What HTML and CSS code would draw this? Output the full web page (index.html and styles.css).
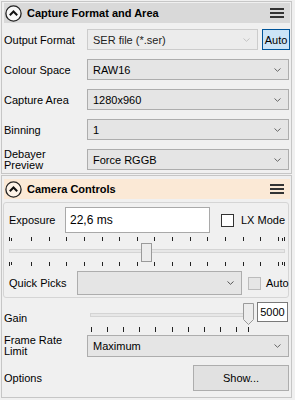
FILE: index.html
```html
<!DOCTYPE html>
<html lang="en">
  <head>
    <meta charset="UTF-8" />
    <title>Capture settings</title>
    <link rel="stylesheet" href="styles.css">
  </head>
  <body>
    <section class="section section-format">
      <div class="bar bar-grey">
        <svg class="bar-toggle" width="17" height="17" viewBox="0 0 17 17">
          <circle cx="8.5" cy="8.5" r="7.6" fill="#f7f7f7" stroke="#222" stroke-width="1.3" />
          <polyline points="4.8,10.2 8.5,6.5 12.2,10.2" fill="none" stroke="#111" stroke-width="2" />
        </svg>
        <span class="bar-title">Capture Format and Area</span>
        <svg class="bar-menu" width="14" height="10" viewBox="0 0 14 10">
          <rect x="0" y="0" width="14" height="2" fill="#333" />
          <rect x="0" y="4" width="14" height="2" fill="#333" />
          <rect x="0" y="8" width="14" height="2" fill="#333" />
        </svg>
      </div>

      <div class="row row-first">
        <span class="lbl">Output Format</span>
        <div class="combo combo-disabled combo-short">
          <span>SER file (*.ser)</span>
          <svg class="chev" width="7" height="4" viewBox="0 0 7 4"><polyline points="0.5,0.5 3.5,3.3 6.5,0.5" fill="none" stroke="#c4c4c4" /></svg>
        </div>
        <button class="auto-btn">Auto</button>
      </div>
      <div class="row">
        <span class="lbl">Colour Space</span>
        <div class="combo">
          <span>RAW16</span>
          <svg class="chev" width="7" height="4" viewBox="0 0 7 4"><polyline points="0.5,0.5 3.5,3.3 6.5,0.5" fill="none" stroke="#666" /></svg>
        </div>
      </div>
      <div class="row">
        <span class="lbl">Capture Area</span>
        <div class="combo">
          <span>1280x960</span>
          <svg class="chev" width="7" height="4" viewBox="0 0 7 4"><polyline points="0.5,0.5 3.5,3.3 6.5,0.5" fill="none" stroke="#666" /></svg>
        </div>
      </div>
      <div class="row">
        <span class="lbl">Binning</span>
        <div class="combo">
          <span>1</span>
          <svg class="chev" width="7" height="4" viewBox="0 0 7 4"><polyline points="0.5,0.5 3.5,3.3 6.5,0.5" fill="none" stroke="#666" /></svg>
        </div>
      </div>
      <div class="row">
        <span class="lbl lbl-two">Debayer<br />Preview</span>
        <div class="combo">
          <span>Force RGGB</span>
          <svg class="chev" width="7" height="4" viewBox="0 0 7 4"><polyline points="0.5,0.5 3.5,3.3 6.5,0.5" fill="none" stroke="#666" /></svg>
        </div>
      </div>
    </section>

    <section class="section section-camera">
      <div class="bar bar-peach">
        <svg class="bar-toggle" width="17" height="17" viewBox="0 0 17 17">
          <circle cx="8.5" cy="8.5" r="7.6" fill="#fdf3e8" stroke="#222" stroke-width="1.3" />
          <polyline points="4.8,10.2 8.5,6.5 12.2,10.2" fill="none" stroke="#111" stroke-width="2" />
        </svg>
        <span class="bar-title">Camera Controls</span>
        <svg class="bar-menu" width="14" height="10" viewBox="0 0 14 10">
          <rect x="0" y="0" width="14" height="2" fill="#333" />
          <rect x="0" y="4" width="14" height="2" fill="#333" />
          <rect x="0" y="8" width="14" height="2" fill="#333" />
        </svg>
      </div>

      <div class="group">
        <div class="exp-row">
          <span class="exp-lbl">Exposure</span>
          <div class="text-box exp-box">22,6 ms</div>
          <span class="check"></span>
          <span class="check-lbl">LX Mode</span>
        </div>

        <svg class="exp-slider" width="284" height="36" viewBox="0 0 284 36">
          <g id="expTicksTop" stroke="#222" stroke-width="1"></g>
          <rect x="5.5" y="16.5" width="275" height="3" fill="#e7e7e7" stroke="#d4d4d4" />
          <rect x="137.5" y="10.5" width="10" height="18" fill="#ececec" stroke="#9a9a9a" />
          <g id="expTicksBottom" stroke="#222" stroke-width="1"></g>
        </svg>

        <div class="qp-row">
          <span class="qp-lbl">Quick Picks</span>
          <div class="combo combo-qp">
            <span></span>
            <svg class="chev" width="7" height="4" viewBox="0 0 7 4"><polyline points="0.5,0.5 3.5,3.3 6.5,0.5" fill="none" stroke="#555" /></svg>
          </div>
          <span class="check check-disabled"></span>
          <span class="check-lbl">Auto</span>
        </div>
      </div>

      <div class="gain-row">
        <span class="gain-lbl">Gain</span>
        <svg class="gain-slider" width="166" height="31" viewBox="0 0 166 31">
          <rect x="0.5" y="11.5" width="159" height="3" fill="#e7e7e7" stroke="#d4d4d4" />
          <g id="gainTicks" stroke="#222" stroke-width="1"></g>
          <polygon points="153.5,1.5 163.5,1.5 163.5,17.5 158.5,22.5 153.5,17.5" fill="#ececec" stroke="#9a9a9a" />
        </svg>
        <div class="text-box gain-box">5000</div>
      </div>

      <div class="row row-fps">
        <span class="lbl lbl-two">Frame Rate<br />Limit</span>
        <div class="combo combo-fps">
          <span>Maximum</span>
          <svg class="chev" width="7" height="4" viewBox="0 0 7 4"><polyline points="0.5,0.5 3.5,3.3 6.5,0.5" fill="none" stroke="#666" /></svg>
        </div>
      </div>

      <div class="row row-options">
        <span class="lbl">Options</span>
        <button class="show-btn">Show...</button>
      </div>
    </section>

    <script>
      // slider tick marks
      const svgNs = "http://www.w3.org/2000/svg";

      function addTick(group, x, y1, y2) {
        const line = document.createElementNS(svgNs, "line");
        line.setAttribute("x1", x + 0.5);
        line.setAttribute("x2", x + 0.5);
        line.setAttribute("y1", y1);
        line.setAttribute("y2", y2);
        group.appendChild(line);
      }

      const expTop = document.getElementById("expTicksTop");
      const expBottom = document.getElementById("expTicksBottom");
      const expXs = [5, 7];
      for (let k = 0; k <= 14; k++) {
        expXs.push(Math.round(27 + k * 17.64));
      }
      expXs.push(278, 280);
      expXs.forEach((x, i) => {
        const short = i === 1 || i === expXs.length - 2;
        addTick(expTop, x, short ? 5 : 4, 8);
        addTick(expBottom, x, 29, short ? 32 : 33);
      });

      const gainTicks = document.getElementById("gainTicks");
      for (let k = 0; k <= 9; k++) {
        addTick(gainTicks, Math.round(1 + k * 16.1), 25, 30);
      }
      addTick(gainTicks, 158, 25, 30);
    </script>
  </body>
</html>
```

FILE: styles.css
```css
body {
  margin: 0;
  background-color: #f0f0f0;
  font-family: "Liberation Sans", Arial, sans-serif;
  font-size: 11px;
  color: #000;
  width: 295px;
  height: 400px;
  overflow: hidden;
}
.section {
  margin: 1px 3px 0 1px;
  border: 1px solid #c6c6c6;
  padding: 1px 1px 3px 2px;
}
.section-camera {
  padding-top: 3px;
  padding-bottom: 6px;
}

/* section header bars */
.bar {
  height: 20px;
  display: flex;
  align-items: center;
  padding: 0 6px 0 1px;
}
.bar-grey {
  background-color: #d9d9d9;
}
.bar-peach {
  background-color: #fbe9d6;
}
.bar-toggle {
  flex: none;
}
.bar-title {
  font-weight: bold;
  margin-left: 5px;
  flex: 1;
}
.bar-menu {
  flex: none;
}

/* label + control rows */
.row {
  display: flex;
  align-items: center;
  height: 21px;
  margin-top: 9px;
}
.row-first {
  margin-top: 6px;
}
.lbl {
  width: 83px;
  flex: none;
}
.lbl-two {
  line-height: 11px;
}
.combo {
  box-sizing: border-box;
  width: 202px;
  height: 21px;
  border: 1px solid #adadad;
  background-color: #e5e5e5;
  display: flex;
  align-items: center;
  justify-content: space-between;
  padding: 0 7px 0 5px;
}
.combo-disabled {
  background-color: #ececec;
  border-color: #cccccc;
  color: #222;
}
.combo-short {
  width: 171px;
}
.auto-btn {
  box-sizing: border-box;
  width: 28px;
  height: 21px;
  margin-left: 4px;
  padding: 0;
  border: 1px solid #005499;
  background-color: #cce4f7;
  font: inherit;
  color: #000;
}

/* camera controls group box */
.group {
  margin: 3px 1px 0 -1px;
  border: 1px solid #d5d5d5;
  border-radius: 3px;
  padding-bottom: 2px;
}
.exp-row {
  display: flex;
  align-items: center;
  padding: 4px 0 0 5px;
  height: 26px;
  white-space: nowrap;
}
.exp-lbl {
  width: 56px;
  flex: none;
}
.text-box {
  box-sizing: border-box;
  background-color: #fff;
  display: flex;
  align-items: center;
  flex: none;
}
.exp-box {
  width: 145px;
  height: 26px;
  border: 1px solid #a9a9a9;
  padding-left: 4px;
  font-size: 12px;
}
.check {
  box-sizing: border-box;
  width: 13px;
  height: 13px;
  border: 1px solid #333;
  background-color: #fff;
  margin-left: 11px;
  flex: none;
}
.check-lbl {
  margin-left: 7px;
  white-space: nowrap;
}
.exp-slider {
  display: block;
}
.qp-row {
  display: flex;
  align-items: center;
  height: 24px;
  margin-top: 2px;
  padding-left: 5px;
  white-space: nowrap;
}
.qp-lbl {
  width: 68px;
  flex: none;
}
.combo-qp {
  width: 165px;
  height: 24px;
  flex: none;
}
.check-disabled {
  background-color: #e6e6e6;
  border-color: #bcbcbc;
  margin-left: 6px;
}
.qp-row .check-lbl {
  margin-left: 5px;
}

/* gain */
.gain-row {
  display: flex;
  align-items: flex-start;
  margin-top: 4px;
  height: 31px;
}
.gain-lbl {
  width: 86px;
  margin-top: 10px;
  flex: none;
}
.gain-slider {
  display: block;
  flex: none;
}
.gain-box {
  width: 31px;
  height: 20px;
  border: 1px solid #7a7a7a;
  justify-content: center;
  margin-left: 1px;
}

.row-fps {
  margin-top: 2px;
  height: 22px;
}
.combo-fps {
  height: 22px;
}
.row-options {
  margin-top: 8px;
  height: 26px;
}
.show-btn {
  box-sizing: border-box;
  margin-left: 106px;
  width: 96px;
  height: 26px;
  border: 1px solid #adadad;
  background-color: #e1e1e1;
  font: inherit;
  color: #000;
  padding: 0;
}
```
